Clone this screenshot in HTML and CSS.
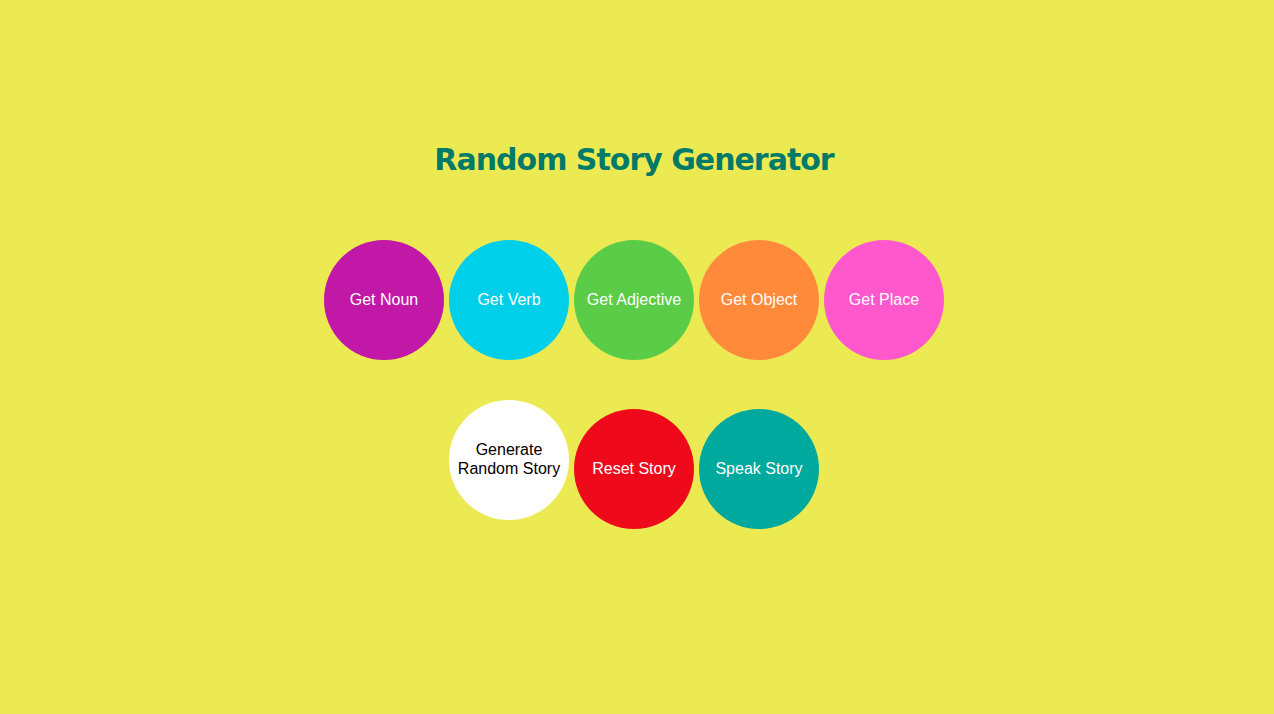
FILE: index.html
```html
<!DOCTYPE html>
<html>
<head>
<meta charset="utf-8">
<title>Random Story Generator</title>
<link rel="stylesheet" href="styles.css">
</head>
<body>
<main class="page">
  <h1 class="title">Random Story Generator</h1>
  <div class="row row-words">
    <button class="btn noun">Get Noun</button>
    <button class="btn verb">Get Verb</button>
    <button class="btn adjective">Get Adjective</button>
    <button class="btn object">Get Object</button>
    <button class="btn place">Get Place</button>
  </div>
  <div class="row row-actions">
    <button class="btn generate">Generate Random Story</button>
    <button class="btn reset low">Reset Story</button>
    <button class="btn speak low">Speak Story</button>
  </div>
</main>
</body>
</html>
```

FILE: styles.css
```css
html, body {
  margin: 0;
  padding: 0;
  background: #ecea53;
}

body {
  font-family: "Liberation Sans", Arial, sans-serif;
  min-height: 714px;
}

.page {
  display: flex;
  flex-direction: column;
  align-items: center;
  padding-top: 137px;
  padding-right: 6px;
}

.title {
  margin: 0;
  font-family: "DejaVu Sans", Verdana, sans-serif;
  font-weight: bold;
  font-size: 30px;
  letter-spacing: -1px;
  line-height: 46px;
  color: #007a68;
}

.row {
  display: flex;
  justify-content: center;
  align-items: flex-start;
  gap: 5px;
}

.row-words {
  margin-top: 57px;
}

.row-actions {
  margin-top: 40px;
}

.btn {
  width: 120px;
  height: 120px;
  border: none;
  border-radius: 50%;
  padding: 0 6px 2px;
  font-family: "Liberation Sans", Arial, sans-serif;
  font-size: 16px;
  line-height: 19px;
  color: #ffffff;
  cursor: pointer;
}

.btn.low {
  margin-top: 9px;
}

.noun { background: #c218a8; }
.verb { background: #00cfea; }
.adjective { background: #5bcc47; }
.object { background: #ff8b3a; }
.place { background: #ff57cc; }
.generate { background: #ffffff; color: #000000; }
.reset { background: #ee0a1b; }
.speak { background: #00a99d; }
```
